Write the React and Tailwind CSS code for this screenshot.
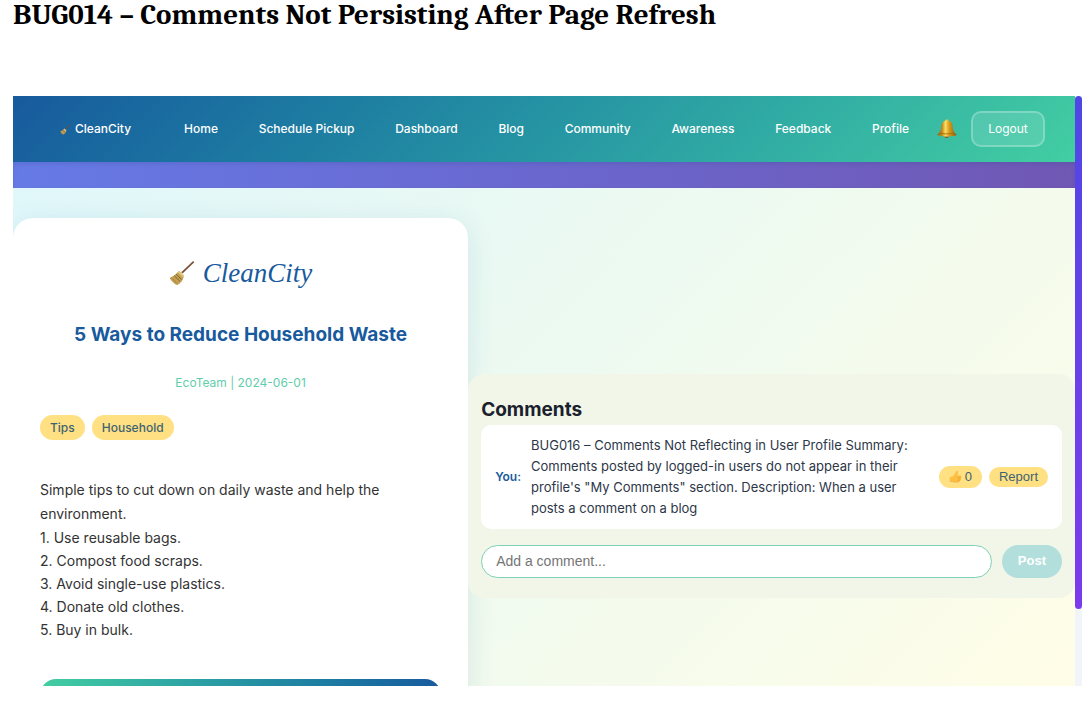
import React from "react";

const links = ["Home", "Schedule Pickup", "Dashboard", "Blog", "Community", "Awareness", "Feedback", "Profile"];

const tips = [
  "Use reusable bags.",
  "Compost food scraps.",
  "Avoid single-use plastics.",
  "Donate old clothes.",
  "Buy in bulk.",
];

function Broom({ className }) {
  return (
    <svg viewBox="0 0 28 28" className={className} aria-hidden="true">
      <path d="M26 1.2 27.2 2.4 14.6 14.6 13.2 13.2Z" fill="#7a4f38" />
      <path d="M10.4 12.2 15.800 17.400C15.600 21 12.800 24.800 9 27 6.200 26.200 2 22.400 .8 19 3.600 18.200 7.400 15.800 10.400 12.200Z" fill="#c4a052" />
      <path d="M11.200 11.600 16.400 16.800 15.200 18.800 9.200 13.200Z" fill="#e0c67c" />
      <path d="M5.600 16.800 11.800 23M7.600 15.200 13.600 21.200" stroke="#7d6230" strokeWidth="1" fill="none" />
      <path d="M3.200 19.600 8.400 25" stroke="#94763a" strokeWidth=".8" fill="none" />
    </svg>
  );
}

function Bell() {
  return (
    <svg viewBox="0 0 20 20" className="h-5 w-5" aria-hidden="true">
      <defs>
        <linearGradient id="bell" x1="0" x2="1" y1="0" y2="0">
          <stop offset="0" stopColor="#8f6210" />
          <stop offset=".25" stopColor="#c48a18" />
          <stop offset=".42" stopColor="#fbdc62" />
          <stop offset=".62" stopColor="#d79a1c" />
          <stop offset="1" stopColor="#8a5c0c" />
        </linearGradient>
      </defs>
      <circle cx="9.6" cy="17" r="2.100" fill="#8a4f12" />
      <path d="M10 .5C11 .5 11.600 1 11.800 1.700 14.400 2.400 15.400 4.400 15.600 7 15.900 10.800 16.600 12.800 19.800 15.800 18.800 17.200 16.200 16.900 14 17.300 11.400 17.800 8.600 17.800 6 17.300 3.800 16.900 1.200 17.200.200 15.800 3.400 12.800 4.100 10.800 4.400 7 4.600 4.400 5.600 2.400 8.200 1.700 8.400 1 9 .5 10 .5Z" fill="url(#bell)" />
      <path d="M2.600 14C6.200 15.200 13.800 15.200 17.400 14" stroke="#9a6410" strokeWidth=".8" fill="none" />
    </svg>
  );
}

function Thumb() {
  return (
    <svg viewBox="0 0 14 14" className="h-[13px] w-[13px]" aria-hidden="true">
      <path d="M8.400.9c1.200.2 1.500 1.400 1.200 2.600l-.5 2.300h3.100c1.100 0 1.300 1.300.6 1.800.6.5.5 1.400-.2 1.800.4.600.2 1.400-.5 1.700.2.9-.3 1.600-1.300 1.600H6.600c-2 0-2.700-.6-5.900-.9V7.600c2.600-.2 3.900-.5 5-2.400C6.700 3.600 7.400 2.700 7.500 1.600c0-.5.400-.8.900-.7Z" fill="#fcbf42" />
      <path d="M9.200 7.600h3.600M9.400 9.500h3.200M9.400 11.200h2.600M1 12.200c2.800.1 3.800.7 5.600.7h4" stroke="#e89a34" strokeWidth=".7" fill="none" />
    </svg>
  );
}

export default function App() {
  return (
    <div className="flex h-screen flex-col bg-white pr-[7px] pb-[29px] pl-[13px] font-['Inter',sans-serif]">
      <h1 className="h-24 shrink-0 font-['Cambria','Caladea','Liberation_Serif',serif] text-[29px] leading-[30px] font-bold text-black">
        BUG014 – Comments Not Persisting After Page Refresh
      </h1>

      <div className="flex min-h-0 flex-1 overflow-hidden">
        <div className="flex min-w-0 flex-1 flex-col">
          <nav className="flex h-[66px] shrink-0 items-center bg-linear-135 from-[#185a9d] to-[#43cea2] pr-[30px] pl-[47px] text-xs font-medium text-white">
            <a href="#home" className="mr-[53px] flex items-center gap-1">
              <Broom className="h-[11px] w-[11px]" />
              CleanCity
            </a>
            <div className="flex flex-1 items-center justify-between">
              {links.map((l) => (
                <a key={l} href={"#" + l.toLowerCase().replace(" ", "-")}>{l}</a>
              ))}
            </div>
            <button type="button" aria-label="Notifications" className="ml-7 mr-3.5">
              <Bell />
            </button>
            <button type="button" className="h-9 w-[74px] rounded-[10px] border-2 border-white/25 bg-white/12 font-normal">
              Logout
            </button>
          </nav>
          <div className="h-[26px] shrink-0 bg-linear-to-r from-[#667ae6] via-[#6a67cf] to-[#7058b4] shadow-[inset_0_2px_4px_rgba(30,60,120,0.15)]" />

          <main className="flex min-h-0 flex-1 items-start overflow-hidden bg-linear-135 from-[#e0f7fa] via-[#eefaf0] to-[#fffde7] pt-[30px]">
            <div className="flex w-full items-center">
              <article className="w-3/7 shrink-0 rounded-[20px] bg-white px-[27px] pt-[35px] pb-[30px] shadow-[0_6px_28px_rgba(24,90,157,0.12)]">
                <div className="flex h-10 items-center justify-center gap-2 text-[#185a9d]">
                  <Broom className="h-[26px] w-[26px]" />
                  <span className="font-['Lucida_Calligraphy','Apple_Chancery','Liberation_Serif',cursive] text-[27px] leading-10 italic">CleanCity</span>
                </div>
                <h2 className="mt-6 text-center text-[19px] leading-9 font-bold text-[#185a9d]">5 Ways to Reduce Household Waste</h2>
                <p className="mt-5 text-center text-xs leading-5 text-[#5fceaa]">EcoTeam | 2024-06-01</p>
                <div className="mt-[22px] flex gap-[7px] text-xs leading-[25px] font-medium text-[#3d6373]">
                  <span className="rounded-full bg-[#ffe082] px-[10px]">Tips</span>
                  <span className="rounded-full bg-[#ffe082] px-[10px]">Household</span>
                </div>
                <div className="mt-[38px] text-sm text-[#333]">
                  <p className="leading-6">Simple tips to cut down on daily waste and help the environment.</p>
                  <ol className="leading-[23px]">
                    {tips.map((t, i) => (
                      <li key={t}>{i + 1}. {t}</li>
                    ))}
                  </ol>
                </div>
                <button type="button" aria-label="Back to Blog" className="mt-[38px] block h-11 w-full rounded-2xl bg-linear-to-r from-[#43cea2] to-[#185a9d]" />
              </article>

              <section className="min-w-0 flex-1 rounded-2xl bg-[#f1f6e8] px-[13px] pt-[21px] pb-5">
                <h3 className="text-[19px] leading-[30px] font-bold text-[#1a202c]">Comments</h3>
                <div className="flex items-center rounded-[10px] bg-white px-3.5 py-2.5 text-[13px] leading-[21px] text-[#2d3748]">
                  <span className="mr-2.5 text-xs font-semibold text-[#185a9d]">You:</span>
                  <p className="flex-1 pr-1.5">
                    BUG016 – Comments Not Reflecting in User Profile Summary: Comments posted by logged-in users do not appear in their profile's "My Comments" section. Description: When a user posts a comment on a blog
                  </p>
                  <button type="button" className="mr-[7px] flex h-[22px] items-center gap-[3px] rounded-full bg-[#ffe082] px-2.5 font-['Liberation_Sans',sans-serif] text-[#3d6373]">
                    <Thumb />0
                  </button>
                  <button type="button" className="h-5 rounded-full bg-[#ffe082] px-2.5 font-['Liberation_Sans',sans-serif] leading-5 text-[#3d6373]">Report</button>
                </div>
                <form className="mt-4 flex gap-2.5" onSubmit={(e) => e.preventDefault()}>
                  <input
                    type="text"
                    aria-label="Add a comment"
                    placeholder="Add a comment..."
                    className="h-[33px] min-w-0 flex-1 rounded-full border border-[#7fd0b4] bg-white px-3.5 font-['Liberation_Sans',sans-serif] text-sm text-[#2d3748] placeholder:text-[#757575]"
                  />
                  <button type="submit" className="h-[33px] rounded-full bg-[#b2dfdb] px-4 font-['Liberation_Sans',sans-serif] text-[13px] font-bold text-white">Post</button>
                </form>
              </section>
            </div>
          </main>
        </div>

        <div className="w-[7px] shrink-0 bg-[#f1f5f9]">
          <div className="h-[87%] rounded-full bg-linear-to-b from-[#4f46e5] to-[#7c3aed]" />
        </div>
      </div>
    </div>
  );
}
